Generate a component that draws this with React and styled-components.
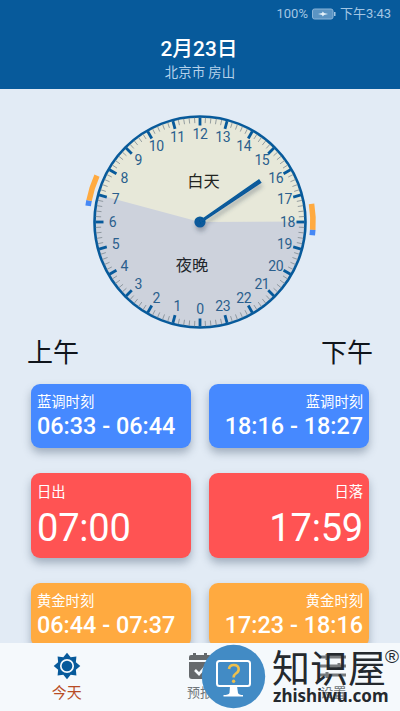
import React from "react";
import styled, { createGlobalStyle } from "styled-components";

const Global = createGlobalStyle`
  * { box-sizing: border-box; }
  body { margin: 0; overflow: hidden; }
`;

const Screen = styled.div`
  position: relative;
  display: flex;
  flex-direction: column;
  width: 400px;
  height: 711px;
  overflow: hidden;
  background: #e2ebf5;
  font-family: Roboto, "Noto Sans CJK SC", sans-serif;
`;

const Header = styled.header`
  flex: none;
  height: 89px;
  background: #075a9b;
  color: #fff;
  text-align: center;
`;

const StatusBar = styled.div`
  display: flex;
  justify-content: flex-end;
  align-items: center;
  gap: 4px;
  height: 28px;
  padding-right: 9px;
  color: #a3c6e3;
  font-size: 13px;
  line-height: 28px;
  white-space: nowrap;
`;

const Title = styled.h1`
  margin: 10px 0 0;
  padding-right: 2px;
  font-size: 20.8px;
  font-weight: 500;
  line-height: 22px;
`;

const Place = styled.div`
  margin-top: 4px;
  font-size: 13.4px;
  line-height: 18px;
  color: #b4d1ea;
`;

const Main = styled.main`
  flex: 1;
  min-height: 0;
  overflow: hidden;
`;

const Dial = styled.svg`
  display: block;
  width: 400px;
  height: 250px;
`;

const HalfDays = styled.div`
  display: flex;
  justify-content: space-between;
  padding: 0 27px;
  height: 45px;
  font-size: 26px;
  line-height: 28px;
  color: #10151c;
  font-weight: 400;
`;

const Cards = styled.div`
  display: grid;
  grid-template-columns: 160px 160px;
  grid-template-rows: 64px 85px 64px;
  gap: 25px 18px;
  padding-left: 31px;
`;

const Card = styled.section`
  padding: ${(p) => (p.$large ? "9px" : "8px")} 6px 0;
  border-radius: 9px;
  background: ${(p) => p.$color};
  color: #fff;
  text-align: ${(p) => (p.$end ? "right" : "left")};
  box-shadow: 0 5px 9px rgba(50, 70, 95, 0.36);
`;

const CardLabel = styled.div`
  font-size: 14.3px;
  line-height: 20px;
`;

const CardTime = styled.div`
  margin-top: ${(p) => (p.$large ? "6px" : "0")};
  font-size: ${(p) => (p.$large ? "38px" : "23.4px")};
  font-weight: ${(p) => (p.$large ? 400 : 500)};
  letter-spacing: ${(p) => (p.$large ? "-0.2px" : "0")};
  line-height: ${(p) => (p.$large ? "41px" : "29px")};
  white-space: nowrap;
`;

const Nav = styled.nav`
  flex: none;
  display: grid;
  grid-template-columns: repeat(3, 1fr);
  height: 68px;
  background: #f5f9fc;
`;

const NavItem = styled.div`
  display: flex;
  flex-direction: column;
  align-items: center;
  padding-top: 9px;
  color: ${(p) => (p.$active ? "#b84c25" : "#71777b")};
  font-size: ${(p) => (p.$active ? "15px" : "13px")};
  line-height: 24px;

  svg { display: block; margin-bottom: 1px; }
`;

const Watermark = styled.div`
  position: absolute;
  left: 201px;
  top: 643px;
  display: flex;
  width: 199px;
  height: 68px;
`;

const Wordmark = styled.div`
  padding-left: 6px;
  color: #24292e;
  white-space: nowrap;
`;

const BrandName = styled.div`
  display: flex;
  align-items: flex-start;
  height: 43px;
  font-size: 38px;
  line-height: 46px;
  font-family: "Noto Sans CJK SC", sans-serif;
`;

const Registered = styled.span`
  margin-left: -1px;
  font-size: 19px;
  line-height: 28px;
  font-weight: 400;
  font-family: "Liberation Sans", sans-serif;
`;

const BrandUrl = styled.div`
  padding-left: 1px;
  font: 700 17px/20px "Noto Sans", sans-serif;
`;

const CX = 200;
const CY = 133;
const point = (hour, r) => {
  const a = ((hour - 12) * Math.PI) / 12;
  return [CX + r * Math.sin(a), CY - r * Math.cos(a)];
};
const arc = (from, to, r) =>
  `M${point(from, r).join(" ")} A${r} ${r} 0 0 1 ${point(to, r).join(" ")}`;

const twilight = [
  { from: 6.55, to: 6.733, color: "#4688f5" },
  { from: 6.733, to: 7.617, color: "#ffaa40" },
  { from: 17.383, to: 18.267, color: "#ffaa40" },
  { from: 18.267, to: 18.45, color: "#4688f5" },
];

function Clock() {
  const ticks = Array.from({ length: 120 }, (_, i) => i);
  return (
    <Dial viewBox="0 0 400 250">
      <defs>
        <filter id="handShadow" x="-30%" y="-30%" width="160%" height="180%">
          <feDropShadow dx="1" dy="4" stdDeviation="2" floodColor="#344456" floodOpacity=".35" />
        </filter>
      </defs>
      <circle cx={CX} cy={CY} r="105" fill="#e7e8d9" />
      <path
        d={`M${CX} ${CY} L${point(17.983, 105).join(" ")} A105 105 0 1 1 ${point(7, 105).join(" ")} Z`}
        fill="#cdd2dc"
      />
      <circle cx={CX} cy={CY} r="105.5" fill="none" stroke="#075a9b" strokeWidth="2.6" />
      {ticks.map((i) => {
        const major = i % 5 === 0;
        const [x1, y1] = point(i / 5, major ? 96.5 : 99);
        const [x2, y2] = point(i / 5, 104.5);
        return (
          <line key={i} x1={x1} y1={y1} x2={x2} y2={y2}
            stroke={major ? "#075a9b" : "#7e8990"} strokeWidth={major ? 2.8 : 0.8} />
        );
      })}
      {Array.from({ length: 24 }, (_, h) => {
        const [x, y] = point(h, 87.5);
        return (
          <text key={h} x={x} y={y + 4.8} textAnchor="middle" fontSize="14" letterSpacing="-0.4" fill="#2b5f8d">{h}</text>
        );
      })}
      {twilight.map((t) => (
        <path key={t.from} d={arc(t.from, t.to, 113)} fill="none" stroke={t.color} strokeWidth="5.6" />
      ))}
      <text x="203.5" y="98" textAnchor="middle" fontSize="16.3" fill="#22241f">白天</text>
      <text x="192" y="182" textAnchor="middle" fontSize="16.3" fill="#22262b">夜晚</text>
      <g filter="url(#handShadow)" fill="#075a9b">
        <circle cx={CX} cy={CY} r="5.6" />
        <path transform={`rotate(55.8 ${CX} ${CY})`} d={`M${CX - 1.6} ${CY} L${CX - 2.3} ${CY - 73} h4.6 L${CX + 1.6} ${CY} Z`} />
      </g>
    </Dial>
  );
}

function Battery() {
  return (
    <svg width="24" height="12" viewBox="0 0 24 12">
      <rect x=".5" y="1" width="20.5" height="10" rx="2" fill="#5b94c3" stroke="#8ab4d8" />
      <path d="M22 4h1.5v4H22z" fill="#a3c6e3" />
      <path d="M6 6l4-1 .8-1.4L12 5l4 1-4 1-1.2 1.4L10 7z" fill="#e4f0f9" />
    </svg>
  );
}

function SunIcon() {
  const star = Array.from({ length: 16 }, (_, i) => {
    const r = i % 2 ? 9.6 : 13.3;
    const a = (i * Math.PI) / 8;
    return `${14 + r * Math.sin(a)},${14 - r * Math.cos(a)}`;
  }).join(" ");
  return (
    <svg width="28" height="28" viewBox="0 0 28 28">
      <polygon points={star} fill="#075a9b" />
      <circle cx="14" cy="14" r="6.2" fill="#075a9b" stroke="#f5f9fc" strokeWidth="1.7" />
    </svg>
  );
}

function CalendarIcon() {
  return (
    <svg width="24" height="28" viewBox="0 0 24 28">
      <path d="M1 8V5q0-2 2-2h2V1h3v2h8V1h3v2h2q2 0 2 2v3zM1 10h22v14q0 3-3 3H4q-3 0-3-3z" fill="#65696c" />
      <path d="M7 18l4 4 7-8" fill="none" stroke="#f5f9fc" strokeWidth="2.6" />
    </svg>
  );
}

function SlidersIcon() {
  return (
    <svg width="28" height="28" viewBox="0 0 28 28" stroke="#777b7e" strokeWidth="3">
      <path d="M1 5h26M1 14h26M1 23h26M8 2v6M20 11v6M8 20v6" />
    </svg>
  );
}

function ComputerBadge() {
  return (
    <svg width="65" height="68" viewBox="0 0 65 68">
      <circle cx="32.5" cy="33.5" r="31.7" fill="#428bc5" />
      <rect x="16" y="18" width="33" height="25" rx="2.5" fill="none" stroke="#fff" strokeWidth="2" />
      <path d="M29 43h7l1 7q1 2 5 2v1.5H22.5V52q5 0 6-2z" fill="#fff" />
      <path d="M28 26q.5-4 4.700-4 5 0 5 4.300 0 2.500-2.800 4.200-2.300 1.500-2.300 4" fill="none" stroke="#eec04d" strokeWidth="2.6" />
      <circle cx="32.6" cy="38.2" r="1.7" fill="#eec04d" />
    </svg>
  );
}

const periods = [
  { label: "蓝调时刻", time: "06:33 - 06:44", color: "#4689ff" },
  { label: "蓝调时刻", time: "18:16 - 18:27", color: "#4689ff", end: true },
  { label: "日出", time: "07:00", color: "#ff5353", large: true },
  { label: "日落", time: "17:59", color: "#ff5353", large: true, end: true },
  { label: "黄金时刻", time: "06:44 - 07:37", color: "#ffaa40" },
  { label: "黄金时刻", time: "17:23 - 18:16", color: "#ffaa40", end: true },
];

export default function App() {
  return (
    <Screen>
      <Global />
      <Header>
        <StatusBar><span>100%</span><Battery /><span>下午3:43</span></StatusBar>
        <Title>2月23日</Title>
        <Place>北京市 房山</Place>
      </Header>
      <Main>
        <Clock />
        <HalfDays><span>上午</span><span>下午</span></HalfDays>
        <Cards>
          {periods.map((p) => (
            <Card key={p.label + p.time} $color={p.color} $end={p.end} $large={p.large}>
              <CardLabel>{p.label}</CardLabel>
              <CardTime $large={p.large}>{p.time}</CardTime>
            </Card>
          ))}
        </Cards>
      </Main>
      <Nav>
        <NavItem $active><SunIcon />今天</NavItem>
        <NavItem><CalendarIcon />预报</NavItem>
        <NavItem><SlidersIcon />设置</NavItem>
      </Nav>
      <Watermark>
        <ComputerBadge />
        <Wordmark>
          <BrandName>知识屋<Registered>®</Registered></BrandName>
          <BrandUrl>zhishiwu.com</BrandUrl>
        </Wordmark>
      </Watermark>
    </Screen>
  );
}
